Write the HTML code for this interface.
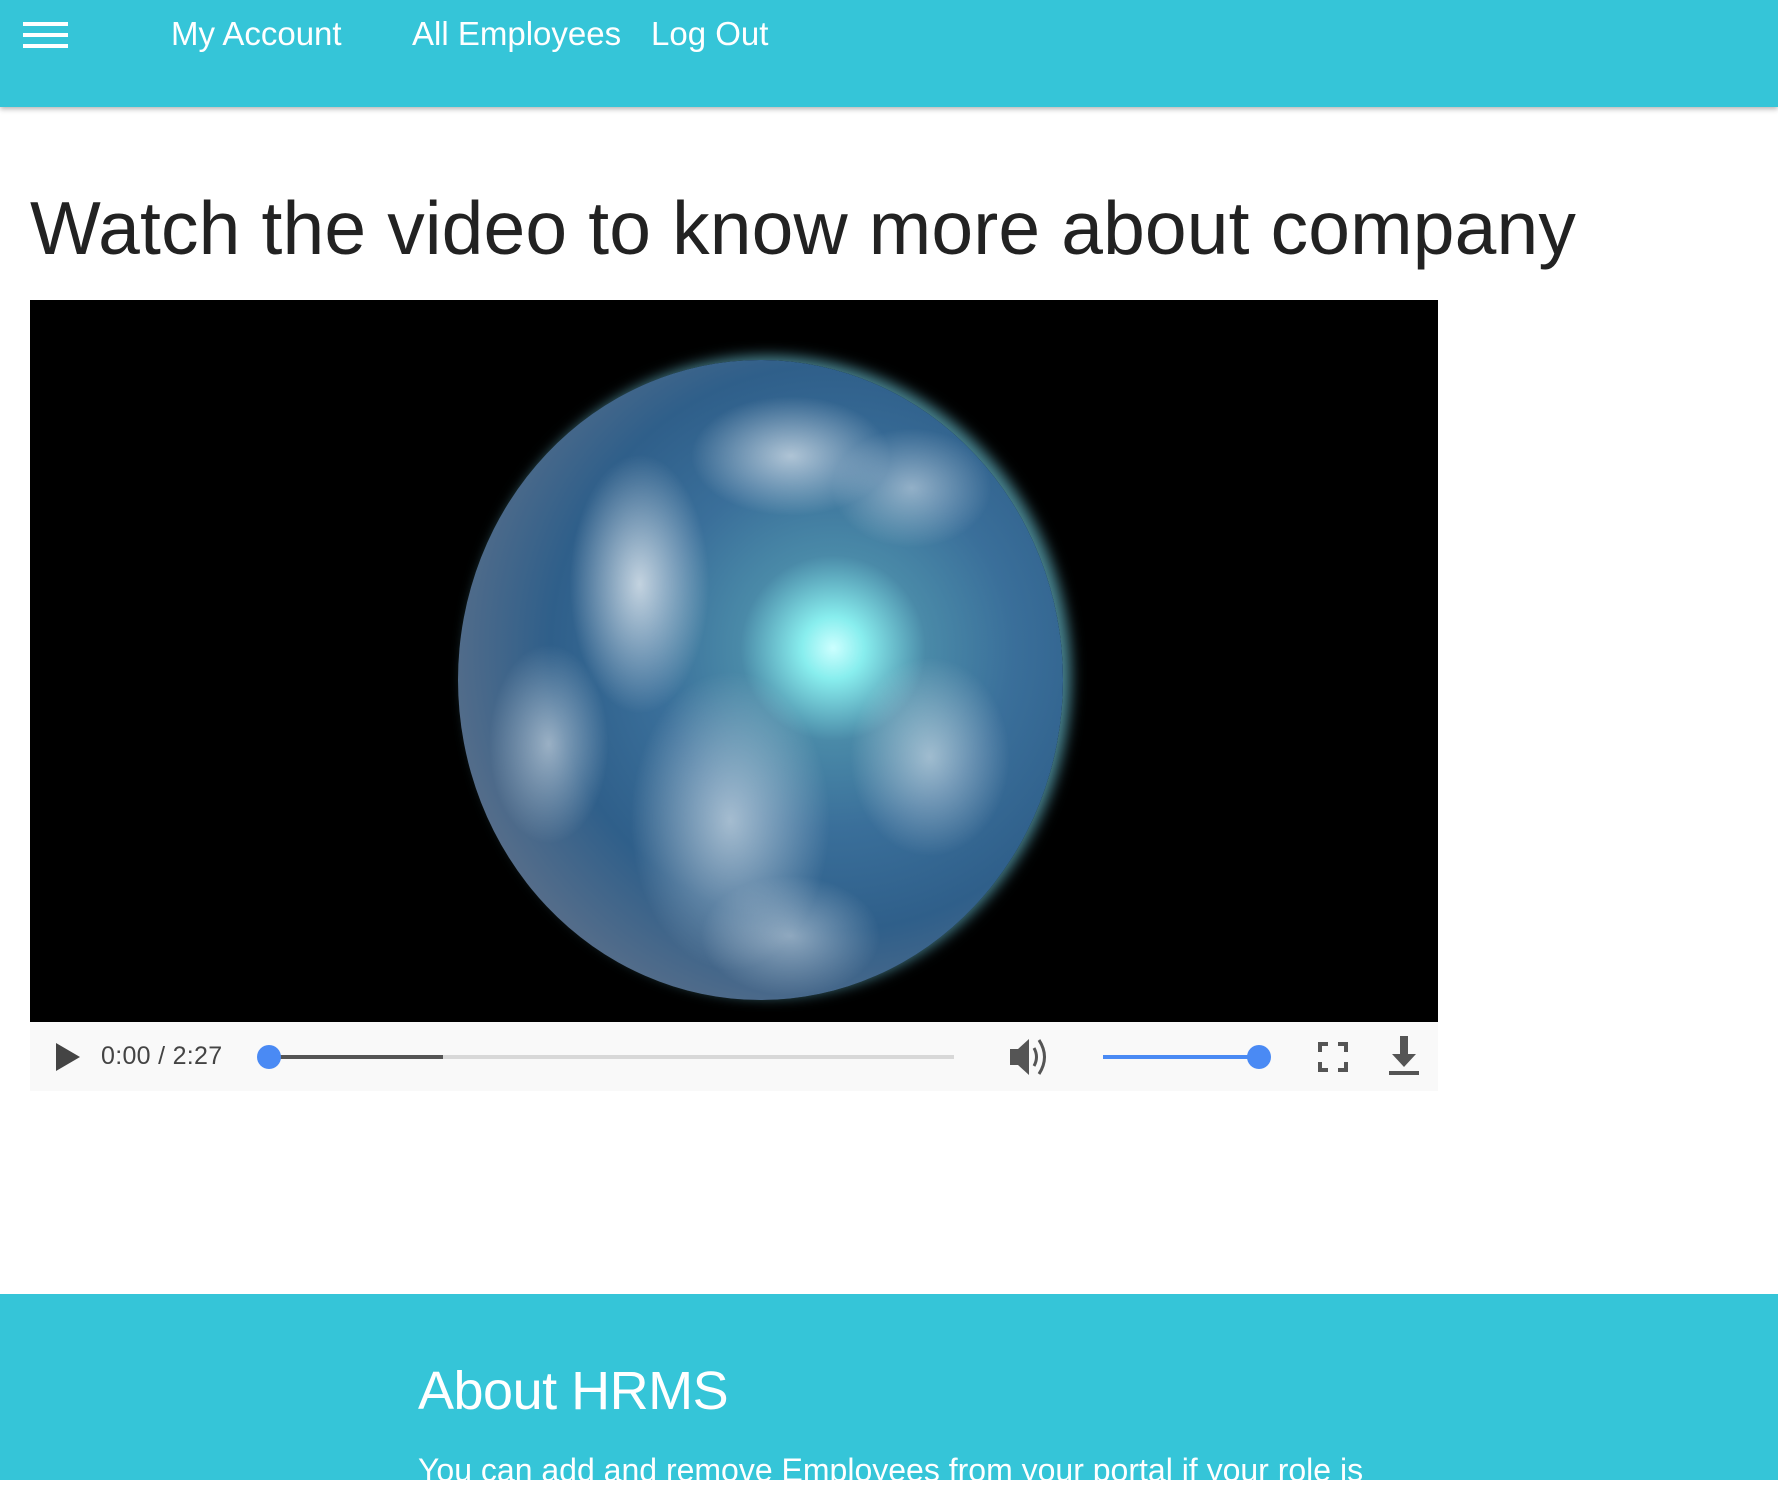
<!DOCTYPE html>
<html><head><meta charset="utf-8"><style>
*{margin:0;padding:0;box-sizing:border-box}
body{width:1778px;height:1480px;overflow:hidden;background:#fff;font-family:"Liberation Sans",Arial,sans-serif;position:relative}
.nav{position:absolute;left:0;top:0;width:1778px;height:107px;background:#35c5d8;box-shadow:0 2px 5px rgba(0,0,0,.3)}
.nav span{position:absolute;top:16px;color:#fff;font-size:33px;line-height:36px}
.ham{position:absolute;left:23px;top:22px;width:45px}
.ham div{height:4px;background:#fff;margin-bottom:7px}
h1{position:absolute;left:30px;top:185px;font-weight:normal;font-size:75px;color:#222;white-space:nowrap;letter-spacing:.15px}
.video{position:absolute;left:30px;top:300px;width:1408px;height:722px;background:#000;overflow:hidden}
.earth{position:absolute;left:428px;top:60px;width:605px;height:640px;border-radius:50%;
background:radial-gradient(circle at 62% 45%,#cff 0,#8ee 6%,#4a8aa8 18%,#3a6f9a 35%,#2f5f8a 55%,#5a6f8a 78%,#c07a70 90%,#3a1818 98%);
box-shadow:8px -4px 14px rgba(120,220,240,.6)}
.clouds{position:absolute;inset:0;border-radius:50%;background:
radial-gradient(ellipse 70px 130px at 30% 35%,rgba(255,255,255,.7),transparent),
radial-gradient(ellipse 100px 60px at 55% 15%,rgba(255,255,255,.6),transparent),
radial-gradient(ellipse 100px 150px at 45% 72%,rgba(255,255,255,.55),transparent),
radial-gradient(ellipse 80px 100px at 78% 62%,rgba(255,255,255,.5),transparent),
radial-gradient(ellipse 60px 100px at 15% 60%,rgba(255,255,255,.5),transparent),
radial-gradient(ellipse 80px 60px at 75% 20%,rgba(255,255,255,.45),transparent),
radial-gradient(ellipse 90px 60px at 55% 90%,rgba(255,255,255,.45),transparent)}
.ctrl{position:absolute;left:30px;top:1022px;width:1408px;height:69px;background:#f9f9f9}
.ctrl .t{position:absolute;left:71px;top:20px;font-size:25px;color:#444;letter-spacing:.3px}
.bar{position:absolute;height:4px;top:33px}
.dot{position:absolute;width:24px;height:24px;border-radius:50%;background:#4a8af4;top:23px}
.foot{position:absolute;left:0;top:1294px;width:1778px;height:186px;background:#35c5d8;color:#fff}
.foot h2{position:absolute;left:418px;top:66px;font-weight:normal;font-size:54px;white-space:nowrap;letter-spacing:-.5px}
.foot p{position:absolute;left:418px;top:158px;font-size:32px;white-space:nowrap}
</style></head><body>
<div class="nav">
<div class="ham"><div></div><div></div><div></div></div>
<span style="left:171px">My Account</span>
<span style="left:412px">All Employees</span>
<span style="left:651px">Log Out</span>
</div>
<h1>Watch the video to know more about company</h1>
<div class="video"><div class="earth"><div class="clouds"></div></div></div>
<div class="ctrl">
<svg style="position:absolute;left:24px;top:20px" width="28" height="30"><path d="M2 1 L26 15 L2 29Z" fill="#444"/></svg>
<div class="t">0:00 / 2:27</div>
<div class="bar" style="left:239px;width:685px;background:#d8d8d8"></div>
<div class="bar" style="left:239px;width:174px;background:#555"></div>
<div class="dot" style="left:227px"></div>
<svg style="position:absolute;left:978px;top:13px" width="42" height="44"><path d="M2 14h8l11-10v36l-11-10H2z" fill="#555"/><path d="M26 13q5 9 0 18M31 5q11 17 0 34" stroke="#555" stroke-width="3" fill="none"/></svg>
<div class="bar" style="left:1073px;width:150px;background:#4a8af4"></div>
<div class="dot" style="left:1217px"></div>
<svg style="position:absolute;left:1288px;top:20px" width="30" height="30" fill="none" stroke="#555" stroke-width="4"><path d="M2 10V2h8M20 2h8v8M28 20v8h-8M10 28H2v-8"/></svg>
<svg style="position:absolute;left:1358px;top:14px" width="32" height="40"><path d="M12 0h8v18h8L16 31 4 18h8z" fill="#555"/><rect x="1" y="35" width="30" height="4" fill="#555"/></svg>
</div>
<div class="foot">
<h2>About HRMS</h2>
<p>You can add and remove Employees from your portal if your role is</p>
</div>
</body></html>
